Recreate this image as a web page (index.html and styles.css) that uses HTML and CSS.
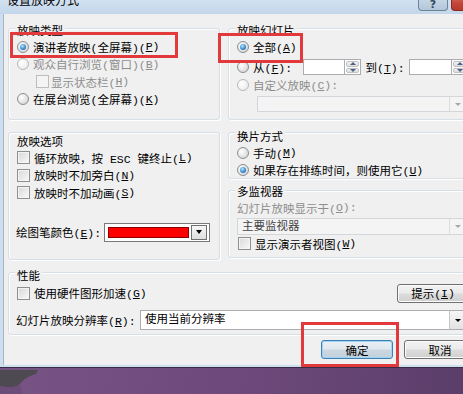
FILE: index.html
```html
<!DOCTYPE html>
<html lang="zh-CN">
<head>
    <meta charset="UTF-8">
    <title>设置放映方式</title>
    <link rel="stylesheet" href="styles.css">
</head>
<body>
<div class="screen">

    <!-- Dialog window -->
    <div class="window">
        <div class="titlebar">
            <span class="title">设置放映方式</span>
            <div class="caption-btns">
                <span class="help-btn">?</span>
                <span class="close-btn"></span>
            </div>
        </div>

        <div class="client">
            <div class="layout">

                <!-- 放映类型 -->
                <div class="group g-type">
                    <div class="legend">放映类型</div>
                    <div class="row"><span class="radio checked"></span>演讲者放映(全屏幕)(<u>P</u>)</div>
                    <div class="row dim"><span class="radio off"></span>观众自行浏览(窗口)(<u>B</u>)</div>
                    <div class="row dim sub"><span class="check off"></span>显示状态栏(<u>H</u>)</div>
                    <div class="row"><span class="radio"></span>在展台浏览(全屏幕)(<u>K</u>)</div>
                </div>

                <!-- 放映幻灯片 -->
                <div class="group g-slides">
                    <div class="legend">放映幻灯片</div>
                    <div class="row tall"><span class="radio checked"></span>全部(<u>A</u>)</div>
                    <div class="row tall gap">
                        <span class="radio"></span>
                        <span class="lbl-from">从(<u>F</u>):</span>
                        <span class="spin"><span class="spin-box"></span><span class="spin-arrows"><i class="up"></i><i class="down"></i></span></span>
                        <span class="lbl-to">到(<u>T</u>):</span>
                        <span class="spin"><span class="spin-box"></span><span class="spin-arrows"><i class="up"></i><i class="down"></i></span></span>
                    </div>
                    <div class="row tall dim"><span class="radio off"></span>自定义放映(<u>C</u>):</div>
                    <div class="combo disabled custom-show"><span class="combo-text"></span><span class="combo-btn"><i></i></span></div>
                </div>

                <!-- 放映选项 -->
                <div class="group g-options">
                    <div class="legend">放映选项</div>
                    <div class="row"><span class="check"></span>循环放映，按 ESC 键终止(<u>L</u>)</div>
                    <div class="row"><span class="check"></span>放映时不加旁白(<u>N</u>)</div>
                    <div class="row"><span class="check"></span>放映时不加动画(<u>S</u>)</div>
                    <div class="pen-row">
                        <span class="lbl-pen">绘图笔颜色(<u>E</u>):</span>
                        <span class="color-pick"><span class="swatch"></span><span class="color-btn"><i></i></span></span>
                    </div>
                </div>

                <div class="right-col">
                    <!-- 换片方式 -->
                    <div class="group g-advance">
                        <div class="legend">换片方式</div>
                        <div class="row"><span class="radio"></span>手动(<u>M</u>)</div>
                        <div class="row"><span class="radio checked"></span>如果存在排练时间，则使用它(<u>U</u>)</div>
                    </div>

                    <!-- 多监视器 -->
                    <div class="group g-monitor">
                        <div class="legend">多监视器</div>
                        <div class="row short dim">幻灯片放映显示于(<u>O</u>):</div>
                        <div class="combo disabled monitor"><span class="combo-text">主要监视器</span><span class="combo-btn"><i></i></span></div>
                        <div class="row short"><span class="check"></span>显示演示者视图(<u>W</u>)</div>
                    </div>
                </div>

                <!-- 性能 -->
                <div class="group g-perf">
                    <div class="legend">性能</div>
                    <div class="perf-row">
                        <span class="check"></span>使用硬件图形加速(<u>G</u>)
                        <span class="btn tip-btn">提示(<u>I</u>)</span>
                    </div>
                    <div class="perf-row res">
                        <span class="lbl-res">幻灯片放映分辨率(<u>R</u>):</span>
                        <span class="combo resolution"><span class="combo-text">使用当前分辨率</span><span class="combo-btn"><i></i></span></span>
                    </div>
                </div>

            </div>

            <div class="buttons">
                <span class="btn default">确定</span>
                <span class="btn">取消</span>
            </div>
        </div>
    </div>

    <!-- Desktop below the dialog -->
    <div class="desktop">
        <svg width="60" height="26" viewBox="0 0 60 26">
            <path d="M0 2 L38 2 L36 6 C30 8 24 10 20 16 C16 20 8 20 0 18 Z" fill="#4e4a52"/>
            <path d="M0 18 C8 20 16 20 20 16 L22 26 L0 26 Z" fill="#6c4c78"/>
        </svg>
    </div>

    <!-- Red marks drawn over the screenshot -->
    <span class="mark mark-type"></span>
    <span class="mark mark-all"></span>
    <span class="mark mark-ok"></span>
</div>
</body>
</html>
```

FILE: styles.css
```css
* {
    box-sizing: border-box;
}

html, body {
    margin: 0;
    padding: 0;
}

body {
    width: 463px;
    height: 394px;
    overflow: hidden;
    background: linear-gradient(100deg, #7b5689 0%, #6e4a7c 55%, #5c3e6a 100%);
    font-family: "Liberation Mono", "Noto Sans CJK SC", monospace;
    font-size: 11.5px;
    color: #000;
}

.screen {
    position: relative;
    width: 463px;
    height: 394px;
    overflow: hidden;
}

u {
    text-decoration: underline;
    text-underline-offset: 1px;
}

/* ---------- window frame ---------- */

.window {
    width: 484px;
    margin-top: -8px;
    background: #cddeef;
    padding-bottom: 2px;
    border-bottom: 1px solid #3a2b44;
}

.titlebar {
    height: 22px;
    display: flex;
    justify-content: space-between;
    background: linear-gradient(#dae7f4, #c3d6eb);
    padding-left: 7px;
}

.title {
    font-size: 12px;
    line-height: 14px;
    margin-top: 3px;
}

.caption-btns {
    display: flex;
    gap: 3px;
}

.help-btn {
    width: 30px;
    height: 19px;
    border: 1px solid #6f8499;
    border-top: 0;
    border-radius: 0 0 4px 4px;
    background: linear-gradient(#d3e1ee, #b3c6da);
    color: #33475c;
    font-family: "DejaVu Sans", sans-serif;
    font-weight: bold;
    font-size: 11px;
    text-align: center;
    line-height: 25px;
}

.close-btn {
    width: 33px;
    height: 19px;
    border: 1px solid #8a2b22;
    border-top: 0;
    border-right: 0;
    border-radius: 0 0 0 4px;
    background: linear-gradient(#e2907f, #c4473a 60%, #b8382c);
}

.client {
    margin: 0 3px;
    width: 478px;
    background: #f0f0f0;
    border-left: 1px solid #a6b6c6;
    padding: 14px 5px 6px 4px;
}

/* ---------- layout ---------- */

.layout {
    display: grid;
    grid-template-columns: 212px 248px;
    grid-template-rows: 92px 128px 63px;
    column-gap: 8px;
    row-gap: 12px;
}

.right-col {
    display: flex;
    flex-direction: column;
    gap: 11px;
}

.group {
    border: 1px solid #d5dfe5;
    border-radius: 3px;
    box-shadow: inset 1px 1px #fff, 1px 1px #fff;
    padding: 0 7px 0 8px;
}

.legend {
    width: fit-content;
    margin: -10px 0 0 -2px;
    padding: 0 2px;
    height: 12px;
    line-height: 12px;
    background: #f0f0f0;
}

.row {
    display: flex;
    align-items: center;
    height: 17.5px;
    white-space: nowrap;
}

.row.tall {
    height: 18px;
}

.row.short {
    height: 17px;
}

.row.gap {
    margin-top: 2px;
}

.dim {
    color: #8d8d8d;
}

.g-type {
    padding-top: 7px;
}

.g-type .sub {
    padding-left: 19px;
}

.g-type .sub .check {
    margin-right: 2px;
}

.g-slides {
    padding-top: 7px;
}

.g-options {
    padding-top: 14px;
}

.g-advance {
    height: 47px;
    padding-top: 9px;
}

.g-monitor {
    height: 68px;
    padding-top: 6px;
}

.g-monitor .check {
    margin-left: 1px;
}

.g-perf {
    grid-column: 1 / 3;
    padding-top: 8px;
    padding-bottom: 4px;
}

/* ---------- radio & check ---------- */

.radio {
    position: relative;
    flex: none;
    width: 12px;
    height: 12px;
    margin-right: 4px;
    border: 1px solid #8c8e90;
    border-radius: 50%;
    background: radial-gradient(circle at 35% 35%, #ffffff, #e6e6e6 50%, #c9c9c9);
}

.radio.checked::after {
    content: "";
    position: absolute;
    left: 2px;
    top: 2px;
    width: 6px;
    height: 6px;
    border-radius: 50%;
    background: radial-gradient(circle at 40% 35%, #b8e6ff, #3c8ed0 55%, #124c86);
}

.radio.off {
    border-color: #b8b9ba;
    background: radial-gradient(circle at 35% 35%, #ffffff, #f0f0f0 60%, #e0e0e0);
}

.check {
    flex: none;
    width: 13px;
    height: 13px;
    margin-right: 4px;
    border: 1px solid #8e8f8f;
    box-shadow: inset 0 0 0 1px #f4f4f4;
    background: linear-gradient(135deg, #d8d8d8, #f9f9f9);
}

.check.off {
    border-color: #bdbdbd;
    background: #f4f4f4;
}

/* ---------- spinner ---------- */

.lbl-from {
    width: 50px;
}

.lbl-to {
    margin-left: 4px;
    width: 44px;
}

.spin {
    display: flex;
    width: 59px;
    height: 16px;
}

.spin-box {
    flex: 1;
    background: #fff;
    border: 1px solid #abadb3;
    border-right: 0;
}

.spin-arrows {
    width: 17px;
    display: flex;
    flex-direction: column;
    border: 1px solid #abadb3;
    background: #fff;
    padding: 1px;
    gap: 1px;
}

.spin-arrows i {
    flex: 1;
    display: flex;
    align-items: center;
    justify-content: center;
    background: linear-gradient(#f3f3f3, #dcdcdc);
    border: 1px solid #c2c2c2;
    border-radius: 2px;
}

.spin-arrows i::after {
    content: "";
    border-left: 3px solid transparent;
    border-right: 3px solid transparent;
}

.spin-arrows .up::after {
    border-bottom: 3px solid #4d6185;
}

.spin-arrows .down::after {
    border-top: 3px solid #4d6185;
}

/* ---------- combos ---------- */

.combo {
    display: flex;
    height: 16px;
    background: #fff;
    border: 1px solid #abadb3;
    line-height: 15px;
}

.combo-text {
    flex: 1;
    padding-left: 4px;
    white-space: nowrap;
}

.combo-btn {
    width: 17px;
    display: flex;
    align-items: center;
    justify-content: center;
    border-left: 1px solid #c7c7c7;
    background: linear-gradient(#f6f6f6, #e2e2e2);
}

.combo-btn i {
    border-left: 3px solid transparent;
    border-right: 3px solid transparent;
    border-top: 3px solid #000;
}

.combo.disabled {
    background: #f4f4f4;
    border-color: #d3d6da;
}

.combo.disabled .combo-btn {
    background: #f4f4f4;
    border-left-color: #dcdcdc;
}

.combo.disabled .combo-btn i {
    border-top-color: #a6a6a6;
}

.custom-show {
    margin: 2px 0 0 20px;
    width: 210px;
}

.monitor {
    margin-top: 2px;
    height: 17px;
    width: 230px;
    color: #444;
}

.resolution {
    height: 20px;
    line-height: 18px;
    width: 327px;
}

/* ---------- pen colour ---------- */

.pen-row {
    display: flex;
    align-items: center;
    height: 19px;
    margin-top: 21px;
    margin-left: -1px;
}

.lbl-pen {
    width: 88px;
}

.color-pick {
    display: flex;
    width: 106px;
    height: 19px;
    border: 1px solid #7a7a7a;
    background: #fff;
    padding: 3px 2px 3px 3px;
    gap: 2px;
}

.swatch {
    flex: 1;
    background: #f00;
    border: 1px solid #8a0000;
}

.color-btn {
    width: 16px;
    margin: -2px 0;
    display: flex;
    align-items: center;
    justify-content: center;
    border: 1px solid #707070;
    background: linear-gradient(#f6f6f6, #dedede);
}

.color-btn i {
    border-left: 3px solid transparent;
    border-right: 3px solid transparent;
    border-top: 4px solid #000;
}

/* ---------- performance ---------- */

.perf-row {
    display: flex;
    align-items: center;
    height: 20px;
    white-space: nowrap;
}

.perf-row.res {
    margin-top: 7px;
    margin-left: -1px;
}

.lbl-res {
    width: 124px;
}

.tip-btn {
    margin-left: auto;
    margin-right: -1px;
    height: 20px;
}

/* ---------- buttons ---------- */

.btn {
    display: flex;
    align-items: center;
    justify-content: center;
    width: 72px;
    height: 19px;
    border: 1px solid #707070;
    border-radius: 3px;
    box-shadow: inset 0 0 0 1px #fcfcfc;
    background: linear-gradient(#f2f2f2 0%, #ebebeb 48%, #dddddd 52%, #cfcfcf 100%);
}

.btn.default {
    border-color: #3c7fb1;
    box-shadow: inset 0 0 0 1px #9fd5f6;
    background: linear-gradient(#eaf0f5 0%, #e0e8ee 48%, #ccd8e1 52%, #c3cfd9 100%);
}

.buttons {
    display: flex;
    justify-content: flex-end;
    gap: 11px;
    margin-top: 5px;
}

/* ---------- desktop & marks ---------- */

.desktop {
    height: 26px;
}

.desktop svg {
    display: block;
}

.mark {
    position: absolute;
    border: 3px solid #e2393d;
}

.mark-type {
    left: 10px;
    top: 32px;
    width: 168px;
    height: 26px;
}

.mark-all {
    left: 218px;
    top: 33px;
    width: 85px;
    height: 30px;
}

.mark-ok {
    left: 301px;
    top: 322px;
    width: 98px;
    height: 45px;
}
```
